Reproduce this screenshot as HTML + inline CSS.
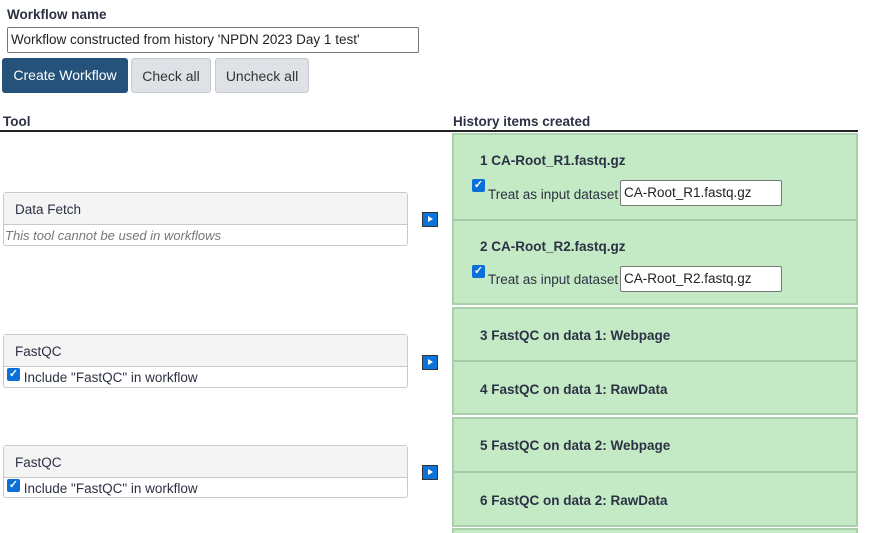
<!DOCTYPE html>
<html><head><style>
*{box-sizing:border-box;margin:0;padding:0}
html,body{width:890px;height:533px;overflow:hidden}
body{background:#fff;font-family:"Liberation Sans",sans-serif;font-size:13.5px;color:#2c3143;position:relative}
.a{position:absolute}
.b{font-weight:bold}
.btn{position:absolute;top:58px;height:35px;border-radius:3px;line-height:35px;text-align:center;font-size:14px}
.g{background:#dee2e6;border:1px solid #c6cbd1;color:#333}
.panel{position:absolute;left:452px;width:406px;background:#c3e9c5;border:2px solid #a9d1ac}
.div{position:absolute;left:0;right:0;height:2px;background:#a8c8aa}
.t{position:absolute;left:26px;font-weight:bold;font-size:13.5px}
.tool{position:absolute;left:3px;width:405px;border:1px solid #c5cad1;border-radius:3px;background:#fff}
.th{background:#f4f4f4;border-bottom:1px solid #c5cad1;height:32px;line-height:33px;padding-left:11px;font-size:13.5px}
.cb{display:inline-block;width:13px;height:13px;background:#0a6fd8;border-radius:2px;color:#fff;font-size:11px;line-height:13px;text-align:center;font-weight:bold;vertical-align:top}
.play{position:absolute;left:422px;width:16px;height:15px;background:#0a74dc;border:1px solid #333}
.play:after{content:"";position:absolute;left:5px;top:3px;border-left:5px solid #fff;border-top:3.5px solid transparent;border-bottom:3.5px solid transparent}
.inp{position:absolute;background:#fff;border:1px solid #777;border-radius:2px;padding-left:3px;font-size:13.5px;color:#222}
</style></head><body>
<div class="a b" style="left:7px;top:7px;font-size:13.5px">Workflow name</div>
<div class="inp" style="left:7px;top:27px;width:412px;height:26px;line-height:24px;font-size:13.5px">Workflow constructed from history 'NPDN 2023 Day 1 test'</div>
<div class="btn" style="left:2px;width:126px;background:#25527a;color:#fff">Create Workflow</div>
<div class="btn g" style="left:131px;width:80px">Check all</div>
<div class="btn g" style="left:215px;width:94px">Uncheck all</div>
<div class="a b" style="left:3px;top:114px">Tool</div>
<div class="a b" style="left:453px;top:114px">History items created</div>
<div class="a" style="left:0;top:130px;width:858px;height:2px;background:#222"></div>

<div class="tool" style="top:192px;height:54px"><div class="th">Data Fetch</div><div style="padding-left:1px;font-style:italic;color:#777;font-size:13px;line-height:21px">This tool cannot be used in workflows</div></div>
<div class="tool" style="top:334px;height:54px"><div class="th">FastQC</div><div style="padding-left:3px;line-height:21px"><span class="cb" style="margin-top:1px">✓</span> Include "FastQC" in workflow</div></div>
<div class="tool" style="top:445px;height:53px"><div class="th">FastQC</div><div style="padding-left:3px;line-height:21px"><span class="cb" style="margin-top:1px">✓</span> Include "FastQC" in workflow</div></div>
<div class="play" style="top:212px"></div>
<div class="play" style="top:355px"></div>
<div class="play" style="top:465px"></div>

<div class="panel" style="top:133px;height:172px">
 <div class="t" style="top:18px">1 CA-Root_R1.fastq.gz</div>
 <div class="a" style="left:18px;top:44px"><span class="cb">✓</span></div>
 <div class="a" style="left:34px;top:52px">Treat as input dataset</div>
 <div class="inp" style="left:166px;top:45px;width:162px;height:26px;line-height:24px">CA-Root_R1.fastq.gz</div>
 <div class="div" style="top:84px"></div>
 <div class="t" style="top:104px">2 CA-Root_R2.fastq.gz</div>
 <div class="a" style="left:18px;top:130px"><span class="cb">✓</span></div>
 <div class="a" style="left:34px;top:137px">Treat as input dataset</div>
 <div class="inp" style="left:166px;top:131px;width:162px;height:26px;line-height:24px">CA-Root_R2.fastq.gz</div>
</div>
<div class="panel" style="top:307px;height:108px">
 <div class="t" style="top:19px">3 FastQC on data 1: Webpage</div>
 <div class="div" style="top:51px"></div>
 <div class="t" style="top:73px">4 FastQC on data 1: RawData</div>
</div>
<div class="panel" style="top:417px;height:110px">
 <div class="t" style="top:19px">5 FastQC on data 2: Webpage</div>
 <div class="div" style="top:52px"></div>
 <div class="t" style="top:74px">6 FastQC on data 2: RawData</div>
</div>
<div class="panel" style="top:528px;height:20px"></div>
</body></html>
